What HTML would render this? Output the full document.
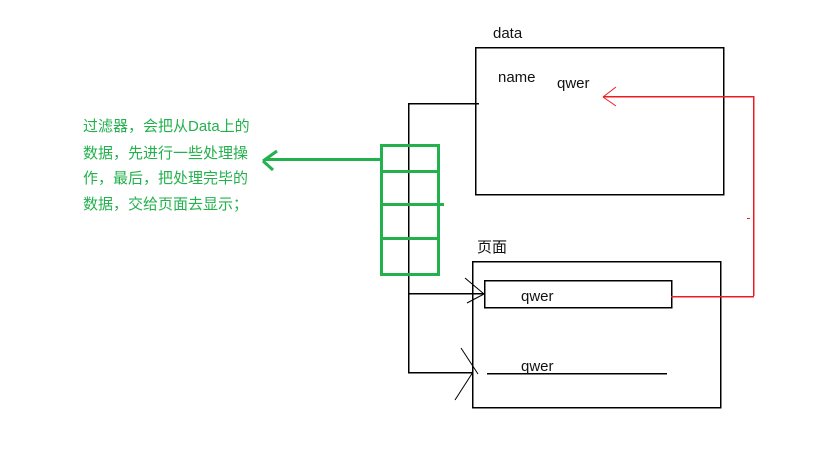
<!DOCTYPE html>
<html><head><meta charset="utf-8"><style>
html,body{margin:0;padding:0;background:#fff;width:835px;height:453px;overflow:hidden}
svg{display:block}
text{font-family:"Liberation Sans","Noto Sans CJK SC",sans-serif;font-size:15px;fill:#111}
.g{fill:#22b14c;font-family:"Liberation Sans","Noto Sans CJK SC",sans-serif;font-size:15px}
</style></head><body>
<svg width="835" height="453" viewBox="0 0 835 453" shape-rendering="crispEdges">
<g fill="none" stroke="#000" stroke-width="1.5">
<rect x="475.5" y="47.5" width="248" height="147"/>
<rect x="472.5" y="261.5" width="248" height="146"/>
<rect x="484.5" y="280.5" width="187" height="27"/>
<polyline points="479,103.5 408.5,103.5 408.5,372.5 473,372.5"/>
<line x1="408" y1="293.5" x2="484" y2="293.5"/>
<line x1="487" y1="373.5" x2="667" y2="373.5"/>
</g>
<g stroke="#000" stroke-width="1" shape-rendering="auto">
<line x1="465" y1="278" x2="484" y2="294"/><line x1="467" y1="303" x2="484" y2="294"/>
<line x1="461" y1="348" x2="478" y2="374"/><line x1="455" y1="400" x2="473" y2="372"/>
</g>
<g stroke="#ed1c24" stroke-width="1.5" fill="none">
<line x1="603" y1="96.5" x2="753" y2="96.5"/>
<line x1="753.5" y1="96" x2="753.5" y2="296"/>
<line x1="671" y1="296.5" x2="754" y2="296.5"/>
</g>
<g stroke="#ed1c24" stroke-width="1" shape-rendering="auto"><line x1="603" y1="97" x2="616" y2="87"/><line x1="603" y1="97" x2="616" y2="106"/></g>
<line x1="747" y1="218.5" x2="750" y2="218.5" stroke="#ed1c24"/>
<g stroke="#22b14c" stroke-width="3" fill="none">
<rect x="381.5" y="145.5" width="57" height="129"/>
<line x1="381" y1="171.5" x2="439" y2="171.5"/>
<line x1="381" y1="204.5" x2="444" y2="204.5"/>
<line x1="381" y1="238.5" x2="439" y2="238.5"/>
<line x1="265" y1="159.5" x2="381" y2="159.5"/>
</g>
<g stroke="#22b14c" stroke-width="3" shape-rendering="auto"><line x1="263" y1="161" x2="277" y2="151"/><line x1="263" y1="161" x2="273" y2="170"/></g>
<text x="493" y="38">data</text>
<text x="498" y="82">name</text>
<text x="557" y="88">qwer</text>
<text x="477" y="252">页面</text>
<text x="521" y="301">qwer</text>
<text x="521" y="371">qwer</text>
<text class="g" x="83" y="131">过滤器，会把从Data上的</text>
<text class="g" x="83" y="158">数据，先进行一些处理操</text>
<text class="g" x="83" y="183">作，最后，把处理完毕的</text>
<text class="g" x="83" y="209">数据，交给页面去显示；</text>
</svg>
</body></html>
